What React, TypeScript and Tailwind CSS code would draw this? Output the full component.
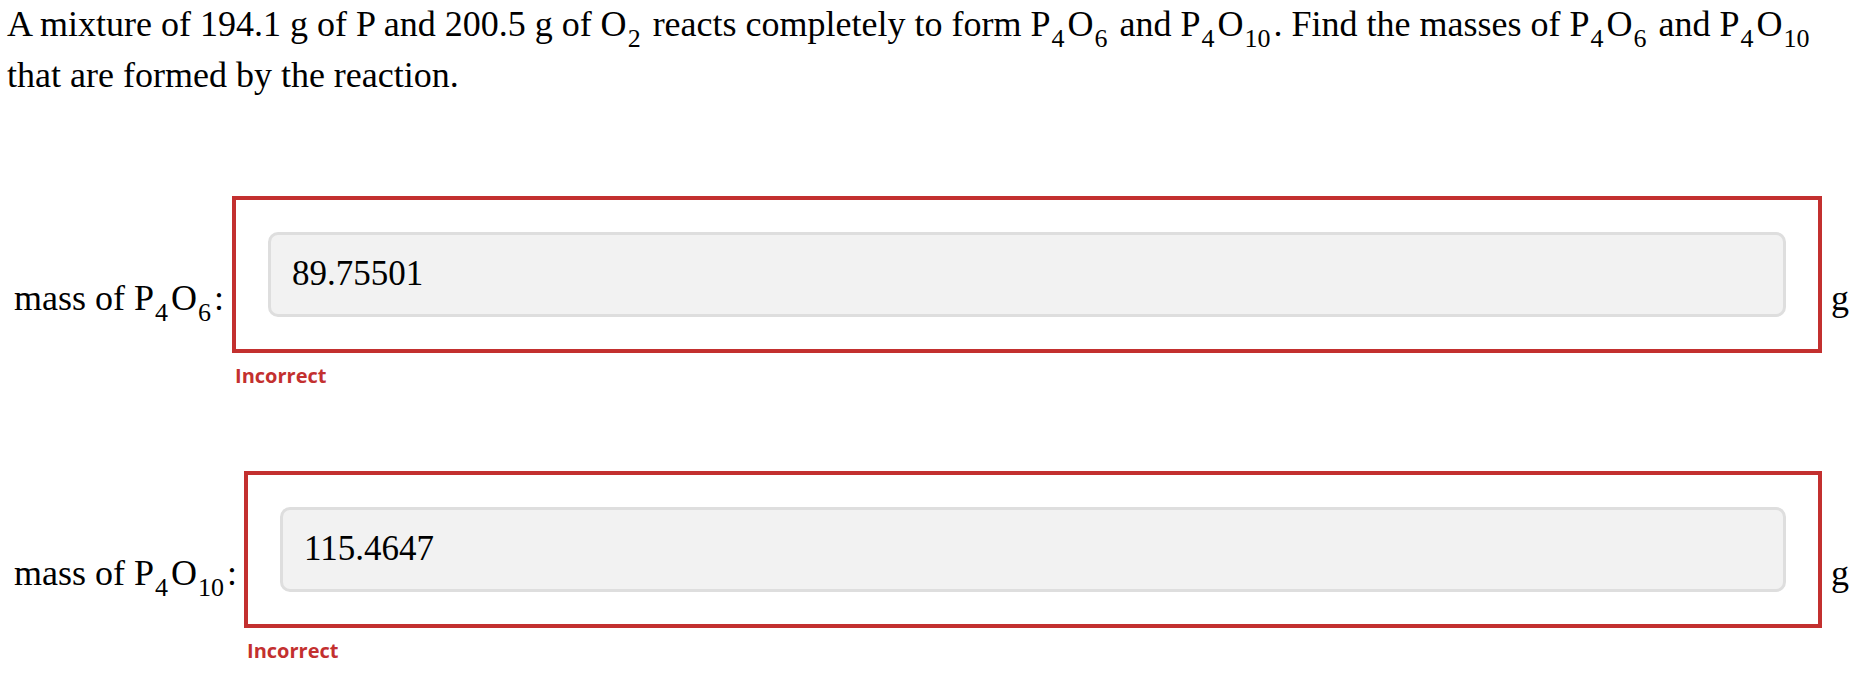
import React from 'react';

const serif = { fontFamily: '"Liberation Serif", "Times New Roman", serif' };

function Sub({ children }: { children: React.ReactNode }) {
  return <sub className="text-[26px] bottom-[-0.42em] ml-[1px] mr-[3px]">{children}</sub>;
}

function Formula({ o }: { o: string }) {
  return (
    <span>
      P<Sub>4</Sub>O<Sub>{o}</Sub>
    </span>
  );
}

function AnswerRow({ o, value, gap }: { o: string; value: string; gap: string }) {
  return (
    <div className="flex items-start pl-[14px] pr-[23px]">
      {/* label */}
      <div className={`mt-[77px] leading-[51px] whitespace-nowrap ${gap}`}>
        mass of <Formula o={o} />:
      </div>

      {/* answer box + feedback */}
      <div className="flex-1 flex flex-col">
        <div className="border-4 border-[#c3302f] p-8">
          <div className="h-[85px] rounded-[10px] border-[3px] border-[#dedede] bg-[#f2f2f2] flex items-center px-[21px] text-[35px]">
            {value}
          </div>
        </div>
        <div
          className="mt-[9px] pl-[3px] text-[20px] leading-[28px] font-bold text-[#c3302f]"
          style={{ fontFamily: '"Open Sans", "Noto Sans", sans-serif' }}
        >
          Incorrect
        </div>
      </div>

      {/* unit */}
      <div className="mt-[77px] ml-[9px] leading-[51px]">g</div>
    </div>
  );
}

export default function App() {
  return (
    <div className="min-h-screen bg-white text-black text-[36px]" style={serif}>
      <p className="pl-[7px] pr-[40px] leading-[51px] -mt-[1px]">
        A mixture of 194.1 g of P and 200.5 g of O<Sub>2</Sub> reacts completely to form{' '}
        <Formula o="6" /> and <Formula o="10" />. Find the masses of <Formula o="6" /> and{' '}
        <Formula o="10" /> that are formed by the reaction.
      </p>

      <div className="mt-[95px]">
        <AnswerRow o="6" value="89.75501" gap="mr-[8px]" />
      </div>
      <div className="mt-[81px]">
        <AnswerRow o="10" value="115.4647" gap="mr-[7px]" />
      </div>
    </div>
  );
}
